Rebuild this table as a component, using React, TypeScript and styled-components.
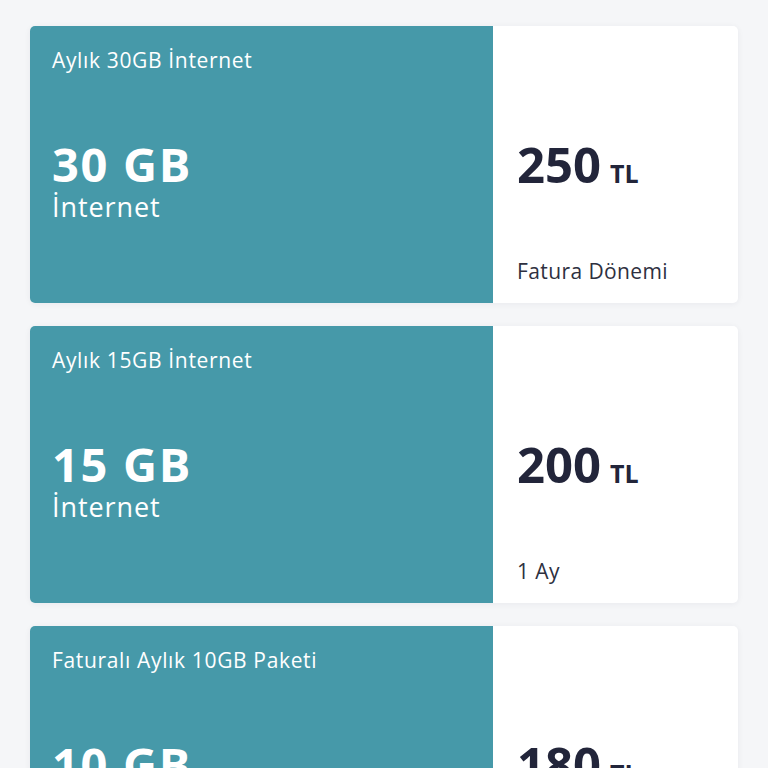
import React from "react";
import styled, { createGlobalStyle } from "styled-components";

const Global = createGlobalStyle`
  html, body { margin: 0; padding: 0; background: #f5f6f8; }
  body { font-family: "Open Sans", "Noto Sans", sans-serif; }
`;

const Page = styled.div`
  padding: 26px 30px;
  display: flex;
  flex-direction: column;
  gap: 23px;
`;

const Card = styled.div`
  display: flex;
  height: 277px;
  border-radius: 5px;
  overflow: hidden;
  background: #fff;
  box-shadow: 0 1px 6px rgba(30, 40, 60, 0.06);
`;

const Left = styled.div`
  width: 463px;
  flex-shrink: 0;
  background: #4699a9;
  color: #fff;
  padding: 20px 22px;
  box-sizing: border-box;
  display: flex;
  flex-direction: column;
`;

const Title = styled.div`
  font-size: 21px;
  line-height: 28px;
  letter-spacing: 0.65px;
`;

const Amount = styled.div`
  margin-top: 66px;
  font-size: 47px;
  font-weight: 700;
  line-height: 48px;
  letter-spacing: 1.7px;
`;

const Unit = styled.div`
  font-size: 27px;
  line-height: 38px;
  letter-spacing: 0.9px;
`;

const Right = styled.div`
  flex: 1;
  padding: 0 24px 18px;
  box-sizing: border-box;
  display: flex;
  flex-direction: column;
  color: #22253a;
`;

const Price = styled.div`
  margin-top: 113px;
  display: flex;
  align-items: baseline;
  gap: 9px;
`;

const PriceValue = styled.span`
  font-size: 49px;
  font-weight: 700;
  line-height: 50px;
`;

const Currency = styled.span`
  font-size: 25px;
  font-weight: 700;
`;

const Period = styled.div`
  margin-top: auto;
  font-size: 21px;
  line-height: 28px;
  letter-spacing: 0.4px;
  color: #2e3040;
`;

const plans = [
  { title: "Aylık 30GB İnternet", amount: "30 GB", unit: "İnternet", price: "250", period: "Fatura Dönemi" },
  { title: "Aylık 15GB İnternet", amount: "15 GB", unit: "İnternet", price: "200", period: "1 Ay" },
  { title: "Faturalı Aylık 10GB Paketi", amount: "10 GB", unit: "İnternet", price: "180", period: "1 Ay" },
];

export default function App() {
  return (
    <>
      <Global />
      <Page>
        {plans.map((p) => (
          <Card key={p.title}>
            <Left>
              <Title>{p.title}</Title>
              <Amount>{p.amount}</Amount>
              <Unit>{p.unit}</Unit>
            </Left>
            <Right>
              <Price>
                <PriceValue>{p.price}</PriceValue>
                <Currency>TL</Currency>
              </Price>
              <Period>{p.period}</Period>
            </Right>
          </Card>
        ))}
      </Page>
    </>
  );
}
